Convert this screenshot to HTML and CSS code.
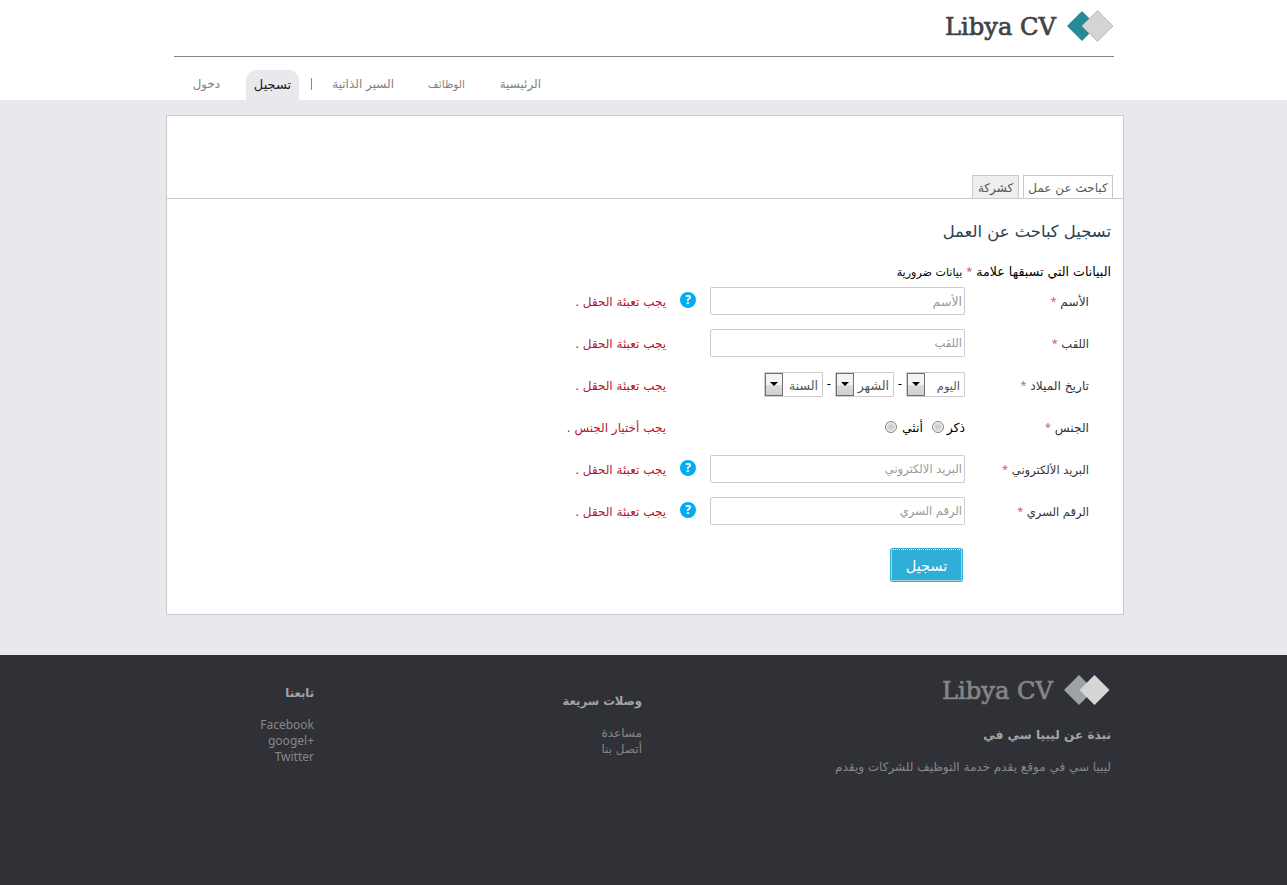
FILE: index.html
```html
<!DOCTYPE html>
<html lang="ar" dir="rtl">
<head>
<meta charset="utf-8">
<title>Libya CV</title>
<link rel="stylesheet" href="styles.css">
</head>
<body>
<header class="header">
  <div class="brand">
    <svg class="logo" width="170" height="40" viewBox="0 0 170 40" direction="ltr">
      <text class="logo-text" x="1" y="29" textLength="111" lengthAdjust="spacingAndGlyphs">Libya CV</text>
      <path d="M138 5l15 15-15 15-15-15z" fill="#268a99"/>
      <path d="M153.500 4.500l15.500 15.500-15.500 15.500-15.500-15.500z" fill="#d4d4d4" stroke="#bdbdbd"/>
    </svg>
  </div>
  <nav class="nav">
    <a class="nav-home">الرئيسية</a>
    <a class="nav-jobs">الوظائف</a>
    <a class="nav-cvs">السير الذاتية</a>
    <span class="divider"></span>
    <a class="active">تسجيل</a>
    <a class="nav-login">دخول</a>
  </nav>
</header>
<main class="panel">
  <div class="tabs"><a class="tab current">كباحث عن عمل</a><a class="tab">كشركة</a></div>
  <h1 class="title">تسجيل كباحث عن العمل</h1>
  <p class="note">البيانات التي تسبقها علامة <i class="req">*</i> <span class="note-end">بيانات ضرورية</span></p>
  <form class="form">
    <div class="row"><label class="label wide">الأسم <i class="req">*</i></label><div class="field"><span class="input wide">الأسم</span></div><div class="help"><svg width="16" height="16" viewBox="0 0 16 16"><circle cx="8" cy="8" r="8" fill="#00aeef"/><text class="mark" x="8" y="12">?</text></svg></div><span class="error">يجب تعبئة الحقل .</span></div>
    <div class="row"><label class="label">اللقب <i class="req">*</i></label><div class="field"><span class="input">اللقب</span></div><div class="help"></div><span class="error">يجب تعبئة الحقل .</span></div>
    <div class="row"><label class="label wide">تاريخ الميلاد <i class="req">*</i></label><div class="field dates">
      <span class="select day"><span>اليوم</span><b class="arrow"></b></span><span class="dash">-</span><span class="select"><span>الشهر</span><b class="arrow"></b></span><span class="dash">-</span><span class="select"><span>السنة</span><b class="arrow"></b></span>
    </div><div class="help"></div><span class="error">يجب تعبئة الحقل .</span></div>
    <div class="row"><label class="label wide">الجنس <i class="req">*</i></label><div class="field gender"><span class="male">ذكر</span><b class="radio"></b><span class="female">أنثي</span><b class="radio"></b></div><div class="help"></div><span class="error">يجب أختيار الجنس .</span></div>
    <div class="row"><label class="label">البريد الألكتروني <i class="req">*</i></label><div class="field"><span class="input">البريد الالكتروني</span></div><div class="help"><svg width="16" height="16" viewBox="0 0 16 16"><circle cx="8" cy="8" r="8" fill="#00aeef"/><text class="mark" x="8" y="12">?</text></svg></div><span class="error">يجب تعبئة الحقل .</span></div>
    <div class="row"><label class="label">الرقم السري <i class="req">*</i></label><div class="field"><span class="input">الرقم السري</span></div><div class="help"><svg width="16" height="16" viewBox="0 0 16 16"><circle cx="8" cy="8" r="8" fill="#00aeef"/><text class="mark" x="8" y="12">?</text></svg></div><span class="error">يجب تعبئة الحقل .</span></div>
    <div class="submit"><span>تسجيل</span></div>
  </form>
</main>
<footer class="footer">
  <div class="footer-inner">
    <section class="about">
      <svg class="logo" width="170" height="40" viewBox="0 0 170 40" direction="ltr">
        <text class="logo-text dim" x="1" y="29" textLength="111" lengthAdjust="spacingAndGlyphs">Libya CV</text>
        <path d="M138 5l15 15-15 15-15-15z" fill="#9fa2a3"/>
        <path d="M153.500 5l15 15-15 15-15-15z" fill="#d6d6d6"/>
      </svg>
      <h2>نبذة عن ليبيا سي في</h2>
      <p>ليبيا سي في موقع يقدم خدمة التوظيف للشركات ويقدم</p>
    </section>
    <section class="links"><h2>وصلات سريعة</h2><p>مساعدة</p><p>أتصل بنا</p></section>
    <section class="follow"><h2>تابعنا</h2><p>Facebook</p><p dir="ltr">googel+</p><p>Twitter</p></section>
  </div>
</footer>
</body>
</html>
```
FILE: styles.css
```css
* { box-sizing: border-box; }
body { margin: 0; background: #e8e9ed; font: 12px/16px "DejaVu Sans", sans-serif; color: #000; white-space: nowrap; }
h1, h2, p { margin: 0; font-weight: normal; }
svg { display: block; }
.header { height: 100px; background: #fff; padding: 0 173px 0 174px; }
.brand { height: 57px; padding-top: 6px; border-bottom: 1px solid #7b8b8b; }
.logo-text { font: 23.5px "DejaVu Serif", serif; fill: #404344; stroke: #404344; stroke-width: 0.7px; }
.logo-text.dim { fill: #858585; stroke: #858585; }
.nav { display: flex; height: 43px; padding: 13px 573px 0 0; color: #7c7f80; line-height: 29px; }
.nav-home { width: 76px; }
.nav-jobs { width: 71px; font-size: 10.6px; }
.nav-cvs { width: 81px; font-size: 12px; }
.divider { width: 1px; height: 12px; margin: 8px 1px 0 12px; background: #6a9a81; }
.active { width: 53px; height: 30px; border-radius: 10px 10px 0 0; background: #e8e9ed; color: #222; text-align: center; font-size: 13px; }
.nav-login { margin-right: 26px; font-size: 11.8px; }
.panel { width: 958px; height: 500px; margin: 15px 163px 0 0; background: #fff; border: 1px solid #c9cacc; }
.tabs { display: flex; gap: 4px; height: 83px; padding: 59px 10px 0 0; border-bottom: 1px solid #c9c9c9; font-size: 12px; line-height: 25px; color: #555; }
.tab { width: 47px; height: 23px; border: 1px solid #c9c9c9; border-bottom: 0; background: #eee; text-align: center; }
.tab.current { width: 90px; background: #fff; }
.title { margin: 20px 12px 0 0; font-size: 16.4px; line-height: 26px; color: #2c3e50; }
.note { margin: 19px 12px 0 0; height: 15px; font-size: 12.6px; }
.note-end { font-size: 11.1px; }
.req { color: #dd5a60; font: 11px/10px "Noto Sans", sans-serif; vertical-align: 1px; }
.form { padding: 0 34px 0 0; }
.row { display: flex; height: 42px; align-items: center; }
.form .row:first-child { margin-top: 1px; }
.label { width: 124px; padding-top: 1px; color: #333; font-size: 11.5px; }
.wide { font-size: 12.2px; }
.field { display: flex; align-items: center; width: 255px; }
.input { width: 255px; height: 28px; padding: 0 2px; border: 1px solid #ccc; border-radius: 2px; line-height: 27px; color: #999; font-size: 11.5px; }
.input.wide { font-size: 12.5px; }
.help { width: 44px; padding: 0 14px 2px 0; }
.mark { font: bold 12px "Open Sans", sans-serif; fill: #fff; text-anchor: middle; }
.error { color: #b5152b; padding-top: 1px; }
.dates { padding-bottom: 2px; font-size: 12px; }
.select { display: flex; justify-content: space-between; width: 59px; height: 25px; padding-right: 4px; border: 1px solid #ccc; border-radius: 1px; line-height: 26px; color: #555; font-size: 12.6px; }
.select.day { font-size: 11.5px; }
.arrow { width: 18px; height: 23px; border: 1px solid #707070; background: linear-gradient(#f3f3f3 50%, #dcdcdc 50%, #cfcfcf); display: flex; align-items: center; justify-content: center; }
.arrow::after { content: ""; border: 4px solid transparent; border-top-color: #000; border-bottom: 0; }
.dash { width: 12px; text-align: center; }
.gender { font-size: 12.4px; padding-top: 1px; }
.radio { width: 12px; height: 12px; margin-bottom: 1px; border: 1px solid #858585; border-radius: 50%; background: radial-gradient(#c4c9ce, #eee); box-shadow: inset 0 0 0 1px #f4f4f4; }
.male { width: 21px; }
.female { width: 26px; margin-right: 9px; }
.submit { width: 73px; height: 34px; margin: 16px 126px 0 0; padding: 1px; border-radius: 3px; background: #2fafd7; color: #fff; font-size: 14.5px; line-height: 32px; text-align: center; }
.submit span { display: block; height: 32px; border: 1px dotted #fff; border-radius: 2px; }
.footer { height: 230px; margin-top: 40px; background: #303136; color: #878787; }
.footer-inner { display: flex; padding-right: 176px; }
.footer h2 { font-weight: bold; font-size: 12.1px; color: #a3a5a8; }
.about { width: 469px; padding-top: 15px; }
.about h2 { margin: 17px 0 16px; }
.links { width: 328px; padding-top: 38px; }
.footer .links h2, .footer .follow h2 { margin-bottom: 16px; font-size: 11.6px; }
.follow { padding-top: 30px; text-align: right; }
.follow p { font: 12px/16px "Noto Sans", sans-serif; }
```
